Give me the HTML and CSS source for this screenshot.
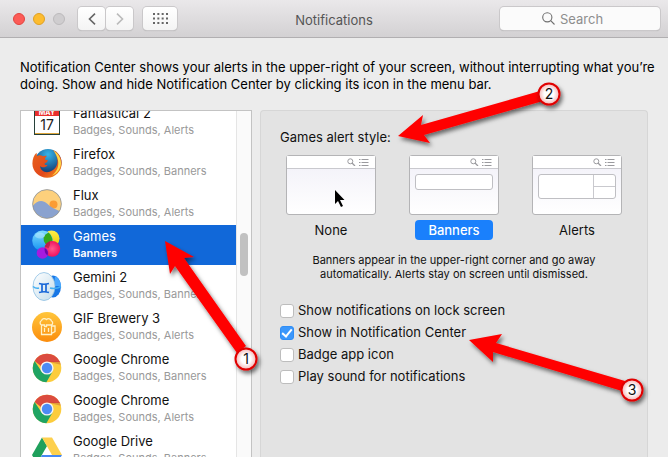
FILE: index.html
```html
<!DOCTYPE html>
<html lang="en">
<head>
<meta charset="utf-8">
<meta name="viewport" content="width=device-width, initial-scale=1">
<title>Notifications</title>
<link rel="stylesheet" href="styles.css">
</head>
<body>
<svg class="defs" aria-hidden="true">
  <defs>
    <symbol id="chrome" viewBox="0 0 30 30">
      <circle cx="15" cy="15" r="14.3" fill="#fccc3d"/>
      <path d="M2.6 7.9A14.3 14.3 0 0 1 27.4 7.9L28 9H15a6.5 6.5 0 0 0-6 4z" fill="#db4b3f"/>
      <path d="M2.6 7.9A14.3 14.3 0 0 0 14.4 29.3L20.7 18.3 9.4 18.3z" fill="#1fa463"/>
      <path d="M15 8.6h13l.8 3.2z" fill="#b23a2e" opacity=".35"/>
      <circle cx="15" cy="15" r="6.6" fill="#f4f4f4"/>
      <circle cx="15" cy="15" r="5.2" fill="#4c8bf5"/>
    </symbol>
    <symbol id="menu-icons" viewBox="0 0 22 8">
      <g fill="none" stroke="#9a9a9e" stroke-width="1"><circle cx="3.3" cy="3.3" r="2.5"/><path d="M5 5l3 3" stroke-width="1.3"/><path d="M12 1.5h1.5M14.500 1.500h7M12 4.500h1.500M14.500 4.500h7M12 7.500h1.500M14.500 7.500h7"/></g>
    </symbol>
    <linearGradient id="gifFill" x1="0" y1="0" x2="0" y2="1"><stop offset="0" stop-color="#ffc63c"/><stop offset="1" stop-color="#fb8c0c"/></linearGradient>
    <radialGradient id="foxBlue" cx=".5" cy=".2" r=".7"><stop offset="0" stop-color="#35b5ea"/><stop offset="1" stop-color="#12386f"/></radialGradient>
    <linearGradient id="foxFire" x1="0" y1="0" x2="1" y2="1"><stop offset="0" stop-color="#e8641b"/><stop offset=".6" stop-color="#e2481b"/><stop offset="1" stop-color="#f59a1c"/></linearGradient>
    <linearGradient id="blueBall" x1="0" y1="0" x2="0" y2="1"><stop offset="0" stop-color="#7fdcff"/><stop offset="1" stop-color="#1594f2"/></linearGradient>
    <linearGradient id="yellowBall" x1="0" y1="0" x2="0" y2="1"><stop offset="0" stop-color="#fff04a"/><stop offset="1" stop-color="#e8c800"/></linearGradient>
    <radialGradient id="pinkBall"><stop offset="0" stop-color="#ff5a8e"/><stop offset="1" stop-color="#f0125e"/></radialGradient>
    <linearGradient id="eggFill" x1="0" y1="0" x2="1" y2="1"><stop offset="0" stop-color="#fff"/><stop offset="1" stop-color="#c3dcea"/></linearGradient>
    <radialGradient id="badgeFill"><stop offset=".45" stop-color="#fff"/><stop offset="1" stop-color="#f3b3b3"/></radialGradient>
    <filter id="shadow" x="-20%" y="-20%" width="150%" height="150%"><feDropShadow dx="2" dy="3" stdDeviation="2" flood-color="#000" flood-opacity=".55"/></filter>
  </defs>
</svg>

<header class="titlebar">
  <div class="controls">
    <div class="lights">
      <button class="light close" aria-label="Close"></button>
      <button class="light minimize" aria-label="Minimize"></button>
      <button class="light zoom" aria-label="Zoom" disabled></button>
    </div>
    <div class="nav">
      <button class="tool" aria-label="Back"><svg width="8" height="12" viewBox="0 0 8 12"><path d="M7 .7L1.500 6 7 11.300" fill="none" stroke="#666" stroke-width="1.600"/></svg></button>
      <button class="tool" aria-label="Forward"><svg width="8" height="12" viewBox="0 0 8 12"><path d="M1 .7L6.500 6 1 11.300" fill="none" stroke="#bbb" stroke-width="1.600"/></svg></button>
    </div>
    <button class="tool grid-button" aria-label="Show all"><svg width="15" height="11" viewBox="0 0 15 11"><path d="M0 1h15M0 5.500h15M0 10h15" stroke="#666" stroke-width="2" stroke-dasharray="2 2.333"/></svg></button>
  </div>
  <h1 class="title">Notifications</h1>
  <label class="search">
    <svg width="13" height="13" viewBox="0 0 13 13" aria-hidden="true"><g fill="none" stroke="#6f6f6f" stroke-width="1.100"><circle cx="5.300" cy="5.300" r="4.600"/><path d="M8.700 8.700l3.800 3.800"/></g></svg>
    <input class="search-input" type="search" placeholder="Search" aria-label="Search">
  </label>
</header>

<main class="content">
  <p class="intro">Notification Center shows your alerts in the upper-right of your screen, without interrupting what you’re doing. Show and hide Notification Center by clicking its icon in the menu bar.</p>

  <div class="columns">
    <section class="app-list" aria-label="Applications">
      <ul class="apps">
        <li><button class="app">
          <svg class="app-icon" viewBox="0 0 30 30"><rect x="2" y="0" width="26" height="28" fill="#27413a"/><rect x="3" y="1" width="24" height="25" fill="#fff"/><path d="M3 1h24v8H3z" fill="#e92f2c"/><path d="M3 26h24v1H3z" fill="#dda63b"/><text class="cal-month" x="15" y="8" text-anchor="middle">MAY</text><text class="cal-day" x="15" y="23" text-anchor="middle">17</text></svg>
          <span class="app-text"><span class="app-name">Fantastical 2</span><span class="app-detail">Badges, Sounds, Alerts</span></span></button></li>
        <li><button class="app">
          <svg class="app-icon" viewBox="0 0 30 30"><circle cx="16" cy="14.500" r="13.500" fill="url(#foxBlue)"/><path d="M21 2c5 2 8.700 7 8.700 13A14.500 14.500 0 0 1 15 29.700C7 29.700.4 23.500.4 15.500.4 11 2 7 4.500 4.800L5 8c2-1 4.200-.8 6 .2 1.500-.7 3-.7 4-.2-1.500 1-2.200 2.200-2 3.600l3 .8c-.5 1.800-2.400 2.200-3.600 3.400.5 1.800 1.600 1 3.200 1.500-2.600 3-6 2-7.500 1 .5 4.500 5 7 9.500 5.500 6.500-2 9-8 7.400-14C24.300 7 23 4 21 2z" fill="url(#foxFire)"/><path d="M21.500 2.500c5 3 7.600 8 7.500 13-.4 6-4 10-9 12 5-4 7-9 6-15-.6-4-2.500-7-4.500-10z" fill="#fddb4b"/></svg>
          <span class="app-text"><span class="app-name">Firefox</span><span class="app-detail">Badges, Sounds, Banners</span></span></button></li>
        <li><button class="app">
          <svg class="app-icon" viewBox="0 0 30 30"><circle cx="15" cy="15" r="14.500" fill="#fdd07c"/><circle cx="21.500" cy="15.500" r="4" fill="#fa9c34"/><path d="M.8 17C5 11 11 10.500 15 14.500c4 4 9 6 12.500 7.500A14.500 14.500 0 0 1 .8 17z" fill="#8aa2cf"/><circle cx="15" cy="15" r="14.400" fill="none" stroke="#77869f" stroke-width=".7"/></svg>
          <span class="app-text"><span class="app-name">Flux</span><span class="app-detail">Badges, Sounds, Alerts</span></span></button></li>
        <li><button class="app selected" aria-current="true">
          <svg class="app-icon" viewBox="0 0 30 30"><circle cx="19.500" cy="8.500" r="8" fill="url(#yellowBall)"/><circle cx="10.500" cy="10.800" r="10.300" fill="url(#blueBall)"/><path d="M11.600 7.500a8 8 0 0 0 7 9A10.300 10.300 0 0 0 16.600 2.500 8 8 0 0 0 11.600 7.500z" fill="#35a81c"/><circle cx="20.300" cy="18.800" r="7.900" fill="url(#pinkBall)"/><path d="M12.800 16.500a7.900 7.900 0 0 1 5.200-5.300 9 9 0 0 1-1.500 7z" fill="#9b1b3c" opacity=".6"/><circle cx="10.500" cy="23" r="5.800" fill="#a51be0"/><path d="M12.700 18a7.900 7.900 0 0 0 2.800 7.500A5.800 5.800 0 0 0 12.700 18z" fill="#6d06a5"/><ellipse cx="8" cy="5.500" rx="5" ry="3" fill="#fff" opacity=".3"/></svg>
          <span class="app-text"><span class="app-name">Games</span><span class="app-detail">Banners</span></span></button></li>
        <li><button class="app">
          <svg class="app-icon" viewBox="0 0 30 30"><ellipse cx="21" cy="15.500" rx="8" ry="11" fill="#1877e6"/><path d="M23 5c5 3 6 8 6 10h-7z" fill="#4aa7ff"/><ellipse cx="12" cy="15.500" rx="11" ry="14" fill="url(#eggFill)" stroke="#7fb8df" stroke-width=".7"/><path d="M1 15.500q3 2.500 6 1.500M18 17q6 1.500 11-1.500" fill="none" stroke="#42aef2" stroke-width="1.500"/><path d="M7 12.500q5 1.500 10 0M7 21.500q5-1.500 10 0M10 13v8M14 13v8" fill="none" stroke="#1a68d8" stroke-width="1.700"/></svg>
          <span class="app-text"><span class="app-name">Gemini 2</span><span class="app-detail">Badges, Sounds, Banners</span></span></button></li>
        <li><button class="app">
          <svg class="app-icon" viewBox="0 0 30 30"><circle cx="15" cy="15" r="15" fill="url(#gifFill)"/><g fill="none" stroke="#fff1c7" stroke-width="1.300"><path d="M9.500 13v9.500h10V13M19.500 14h3.500v5.500l-3.500 2M12.500 16v4M16.500 16v4M9.500 13a2.500 2.500 0 0 1 0-4.500 3 3 0 0 1 5-1 3 3 0 0 1 5 1.500 2.300 2.300 0 0 1 0 4h-5v1.500h-2V13z"/></g></svg>
          <span class="app-text"><span class="app-name">GIF Brewery 3</span><span class="app-detail">Badges, Sounds, Alerts</span></span></button></li>
        <li><button class="app">
          <svg class="app-icon"><use href="#chrome"/></svg>
          <span class="app-text"><span class="app-name">Google Chrome</span><span class="app-detail">Badges, Sounds, Banners</span></span></button></li>
        <li><button class="app">
          <svg class="app-icon"><use href="#chrome"/></svg>
          <span class="app-text"><span class="app-name">Google Chrome</span><span class="app-detail">Badges, Sounds, Alerts</span></span></button></li>
        <li><button class="app">
          <svg class="app-icon" viewBox="0 0 30 30"><path d="M10 2.500L0 20l5 8.500L15 11z" fill="#1fa05c"/><path d="M10 2.500h10L30 20H20z" fill="#fdd04e"/><path d="M10 20h20l-5 8.500H5z" fill="#4688f4"/></svg>
          <span class="app-text"><span class="app-name">Google Drive</span><span class="app-detail">Badges, Sounds, Banners</span></span></button></li>
      </ul>
      <div class="scrollbar"><div class="thumb"></div></div>
    </section>

    <section class="panel">
      <h2 class="panel-title">Games alert style:</h2>
      <div class="styles">
        <button class="style">
          <span class="preview"><span class="preview-bar"><svg class="preview-icons"><use href="#menu-icons"/></svg></span></span>
          <span class="style-name">None</span>
        </button>
        <button class="style chosen" aria-pressed="true">
          <span class="preview"><span class="preview-bar"><svg class="preview-icons"><use href="#menu-icons"/></svg></span><span class="banner"></span></span>
          <span class="style-name">Banners</span>
        </button>
        <button class="style">
          <span class="preview"><span class="preview-bar"><svg class="preview-icons"><use href="#menu-icons"/></svg></span><span class="banner alert"><span class="alert-actions"><span></span><span></span></span></span></span>
          <span class="style-name">Alerts</span>
        </button>
      </div>
      <p class="hint">Banners appear in the upper-right corner and go away automatically. Alerts stay on screen until dismissed.</p>
      <div class="options">
        <label class="option"><input class="check" type="checkbox">Show notifications on lock screen</label>
        <label class="option"><input class="check" type="checkbox" checked>Show in Notification Center</label>
        <label class="option"><input class="check" type="checkbox">Badge app icon</label>
        <label class="option"><input class="check" type="checkbox">Play sound for notifications</label>
      </div>
    </section>
  </div>
</main>

<svg class="annotations" width="668" height="457" viewBox="0 0 668 457" aria-hidden="true">
  <g filter="url(#shadow)" fill="#f00">
    <path d="M165 241L194 257 184 258 246 346 237 353 175 266 170 274z"/>
    <path d="M398 136L423 115 421 125 540 91 543 101 424 135 430 143z"/>
    <path d="M469 340L502 334 496 343 625 381 622 391 493 352 493 362z"/>
  </g>
  <g filter="url(#shadow)" fill="url(#badgeFill)" stroke="#e00000" stroke-width="2">
    <circle cx="246" cy="359" r="10.500"/><circle cx="549" cy="94" r="10.500"/><circle cx="632" cy="390" r="10.500"/>
  </g>
  <g class="numbers" text-anchor="middle"><text x="246" y="364">1</text><text x="549" y="99">2</text><text x="632" y="395">3</text></g>
  <path class="cursor" d="M335 190v14l3-3 3 6 2-1-3-6h4.500z"/>
</svg>
</body>
</html>
```
FILE: styles.css
```css
* { box-sizing: border-box; }

body {
  position: relative;
  display: flex;
  flex-direction: column;
  height: 100vh;
  margin: 0;
  overflow: hidden;
  background: #ececec;
  color: #111;
  font: 13px/17px Inter, "Liberation Sans", sans-serif;
}

button {
  padding: 0;
  border: 0;
  background: none;
  color: inherit;
  font: inherit;
}

.defs { position: absolute; width: 0; height: 0; }

.titlebar {
  display: grid;
  grid-template-columns: 1fr auto 1fr;
  align-items: center;
  flex: none;
  height: 38px;
  padding: 0 8px;
  border-bottom: 1px solid #b1afb1;
  background: linear-gradient(#eae8ea, #d3d1d3);
}

.controls, .lights, .nav { display: flex; align-items: center; }
.controls { padding-left: 5px; }
.lights { gap: 8px; margin-right: 13px; }
.light { width: 12px; height: 12px; border: 1px solid; border-radius: 50%; }
.close { background: #fc5b57; border-color: #e2443f; }
.minimize { background: #fdbc2f; border-color: #dfa023; }
.zoom { background: #cfcdcf; border-color: #bcbabc; }

.tool {
  display: grid;
  place-items: center;
  width: 27px;
  height: 23px;
  border-radius: 4px;
  background: linear-gradient(#fff, #f4f4f4);
  box-shadow: 0 0 0 1px #cac8ca, 0 1px 1px #aaa;
}
.nav { gap: 1px; margin-right: 10px; }
.grid-button { width: 34px; }

.title { margin: 0; padding-top: 3px; color: #555; font-size: 13px; font-weight: 400; }

.search {
  display: flex;
  align-items: center;
  justify-self: end;
  gap: 5px;
  width: 160px;
  height: 23px;
  padding-left: 42px;
  border-radius: 4px;
  background: #fbfbfb;
  box-shadow: 0 0 0 1px #cac8ca, 0 1px 1px #aaa;
}
.search-input {
  flex: 1;
  min-width: 0;
  padding: 2px 0 0;
  border: 0;
  outline: 0;
  background: none;
  font: inherit;
}
.search-input::placeholder { color: #8e8e8e; }

.content {
  display: flex;
  flex: 1;
  flex-direction: column;
  min-height: 0;
  padding: 21px 0 0 20px;
}
.intro { margin: 0 0 17px; padding-right: 4px; color: #000; }

.columns { display: flex; flex: 1; gap: 8px; min-height: 0; padding-right: 20px; }

.app-list {
  display: flex;
  flex: none;
  width: 232px;
  overflow: hidden;
  border: 1px solid #c3c3c3;
  border-bottom: 0;
  background: #fff;
}
.apps { flex: 1; margin: -9px 0 0; padding: 0; list-style: none; }
.app {
  display: flex;
  align-items: center;
  gap: 11px;
  width: 100%;
  height: 40px;
  margin-bottom: 1px;
  padding-left: 11px;
  text-align: left;
}
.app-icon { flex: none; width: 30px; height: 30px; }
.app-name, .app-detail { display: block; }
.app-detail { color: #999; font-size: 11px; }
.selected { background: #1168d9; color: #fff; }
.selected .app-detail { color: #fff; font-weight: 600; }
.cal-month { fill: #fff; font-size: 7px; font-weight: 700; }
.cal-day { fill: #222; font-size: 14px; }

.scrollbar {
  flex: none;
  width: 15px;
  padding: 122px 3px 0;
  border-left: 1px solid #e5e5e5;
  background: #fafafa;
}
.thumb { height: 43px; border-radius: 4px; background: #c1c1c1; }

.panel {
  flex: 1;
  min-width: 0;
  padding: 18px 19px 0;
  border: 1px solid #d6d6d6;
  border-bottom: 0;
  border-radius: 4px 4px 0 0;
  background: #e3e3e3;
}
.panel-title { margin: 0 0 9px; font-size: 13px; font-weight: 400; }
.styles { display: flex; justify-content: space-between; padding: 0 6px; }
.style { display: flex; flex-direction: column; align-items: center; gap: 5px; }
.preview {
  display: flex;
  flex-direction: column;
  width: 90px;
  height: 60px;
  border: 1px solid #b4b4b6;
  border-radius: 3px;
  background: linear-gradient(#f1f0f8, #fff);
}
.preview-bar {
  display: flex;
  align-items: center;
  justify-content: flex-end;
  height: 13px;
  padding-right: 6px;
  border-bottom: 1px solid #c9c9ce;
  background: #fff;
}
.preview-icons { width: 22px; height: 8px; }
.banner {
  display: flex;
  justify-content: flex-end;
  height: 16px;
  margin: 5px;
  border: 1px solid #bfbfc3;
  border-radius: 3px;
  background: #fff;
}
.alert { height: 25px; }
.alert-actions { display: flex; flex-direction: column; width: 22px; border-left: 1px solid #c9c9ce; }
.alert-actions span { flex: 1; }
.alert-actions span + span { border-top: 1px solid #c9c9ce; }
.style-name { padding: 2px 13px 1px; border-radius: 4px; }
.chosen .style-name { background: #1a80fc; color: #fff; font-weight: 500; }

.hint { max-width: 310px; margin: 13px auto 21px; font-size: 11px; line-height: 14px; text-align: center; }

.options { display: flex; flex-direction: column; gap: 5px; }
.option { display: flex; align-items: center; gap: 4px; }
.check {
  appearance: none;
  display: grid;
  place-items: center;
  width: 14px;
  height: 14px;
  margin: 0;
  border: 1px solid #bdbdbd;
  border-radius: 3px;
  background: #fff;
}
.check:checked { border-color: #2f8df5; background: #3b97fb; }
.check:checked::before {
  content: "";
  width: 4px;
  height: 8px;
  margin-bottom: 2px;
  border: solid #fff;
  border-width: 0 2px 2px 0;
  transform: rotate(40deg);
}

.annotations { position: absolute; top: 0; left: 0; pointer-events: none; }
.numbers { fill: #111; font-size: 14px; }
.cursor { fill: #000; stroke: #fff; stroke-width: 1px; paint-order: stroke; }
```
